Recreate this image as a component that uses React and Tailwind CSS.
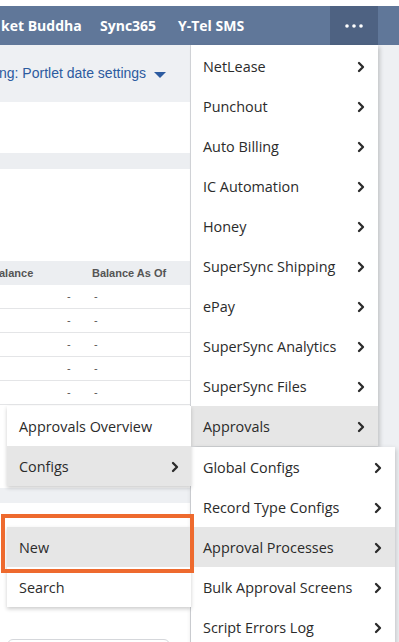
import React from "react";

const Chevron = ({ className = "" }) => (
  <svg width="8" height="12" viewBox="0 0 8 12" className={className}>
    <path d="M2 2 L6 6 L2 10" fill="none" stroke="#2a2a2a" strokeWidth="2.3" strokeLinecap="round" strokeLinejoin="round" />
  </svg>
);

const Item = ({ label, chevron = true, active = false, pr = "pr-[14px]" }) => (
  <div className={`h-[40px] flex items-center justify-between pl-[12px] pt-[2px] ${pr} ${active ? "bg-[#e6e6e6]" : "bg-white"}`}>
    <span className="text-[14.4px] text-[#2b2b2b]">{label}</span>
    {chevron && <Chevron />}
  </div>
);

export default function App() {
  const main = ["NetLease", "Punchout", "Auto Billing", "IC Automation", "Honey", "SuperSync Shipping", "ePay", "SuperSync Analytics", "SuperSync Files"];
  const sub = ["Global Configs", "Record Type Configs", "Approval Processes", "Bulk Approval Screens", "Script Errors Log"];
  return (
    <div className="relative w-[399px] h-[642px] overflow-hidden bg-white" style={{ fontFamily: '"Open Sans", "Liberation Sans", sans-serif' }}>
      <div className="h-[6px] bg-white" />
      <div className="h-[39px] bg-[#607799] flex items-center text-white font-bold text-[14px]">
        <span className="ml-[1px] w-[99px]">ket Buddha</span>
        <span className="w-[78px]">Sync365</span>
        <span className="w-[152px]">Y-Tel SMS</span>
        <div className="w-[48px] h-full bg-[#4e6282] flex items-center justify-center">
          <svg width="18" height="4" viewBox="0 0 18 4">
            <circle cx="2" cy="2" r="1.8" fill="white" />
            <circle cx="9" cy="2" r="1.8" fill="white" />
            <circle cx="16" cy="2" r="1.8" fill="white" />
          </svg>
        </div>
      </div>
      <div className="flex h-[597px] bg-[#eef0f3]">
        <div className="w-[191px] border-r border-[#d5d7db] flex flex-col" style={{ fontFamily: '"Liberation Sans", Arial, sans-serif' }}>
          <div className="h-[57px] bg-[#eef0f3] flex items-center text-[14px] text-[#2c5ba0] whitespace-nowrap overflow-hidden">
            <span className="-ml-[1px]">ng: Portlet date settings</span>
            <svg width="12" height="6" viewBox="0 0 12 6" className="ml-[8px] mt-[3px]">
              <path d="M0 0 L12 0 L6 6 Z" fill="#2c5ba0" />
            </svg>
          </div>
          <div className="h-[51px] bg-white" />
          <div className="h-[16px] bg-[#eceef1]" />
          <div className="h-[92px] bg-white" />
          <div className="h-[24px] bg-[#eceef1] flex items-center text-[11px] font-bold text-[#555]">
            <span className="w-[93px] -ml-[1px]">alance</span>
            <span>Balance As Of</span>
          </div>
          {[0, 1, 2, 3, 4].map((i) => (
            <div key={i} className="h-[24px] bg-white border-b border-[#e4e5e7] flex items-center text-[11px] text-[#555]">
              <span className="ml-[67px] w-[27px]">-</span>
              <span>-</span>
            </div>
          ))}
          <div className="h-[83px] bg-white" />
          <div className="h-[15px] bg-[#eef0f3]" />
          <div className="flex-1 bg-white relative">
            <div className="absolute left-[7px] top-[136px] w-[163px] h-[20px] border border-[#d5d7db] rounded-t-[6px] bg-white" />
          </div>
        </div>
        <div className="flex-1 bg-[#eef0f3]" />
      </div>

      {/* main menu */}
      <div className="absolute left-[191px] top-[45px] w-[187px] bg-white shadow-[2px_2px_4px_rgba(0,0,0,0.18)] pt-[1px]">
        {main.map((m) => (
          <Item key={m} label={m} pr="pr-[13px]" />
        ))}
        <Item label="Approvals" active pr="pr-[13px]" />
      </div>

      {/* level 2 submenu */}
      <div className="absolute left-[191px] top-[447px] w-[204px] bg-white shadow-[1px_2px_5px_rgba(0,0,0,0.2)]">
        {sub.map((s) => (
          <Item key={s} label={s} active={s === "Approval Processes"} pr="pr-[13px]" />
        ))}
      </div>

      {/* left submenu */}
      <div className="absolute left-[7px] top-[406px] w-[184px] bg-white shadow-[0_2px_4px_rgba(0,0,0,0.2)]">
        <Item label="Approvals Overview" chevron={false} />
        <Item label="Configs" active pr="pr-[12px]" />
      </div>

      {/* configs submenu */}
      <div className="absolute left-[7px] top-[527px] w-[184px] bg-white shadow-[0_2px_4px_rgba(0,0,0,0.2)]">
        <Item label="New" chevron={false} active />
        <Item label="Search" chevron={false} />
      </div>

      {/* highlight box */}
      <div className="absolute left-[1px] top-[514px] w-[193px] h-[59px] border-[4px] border-[#ee6a2e]" />
    </div>
  );
}
